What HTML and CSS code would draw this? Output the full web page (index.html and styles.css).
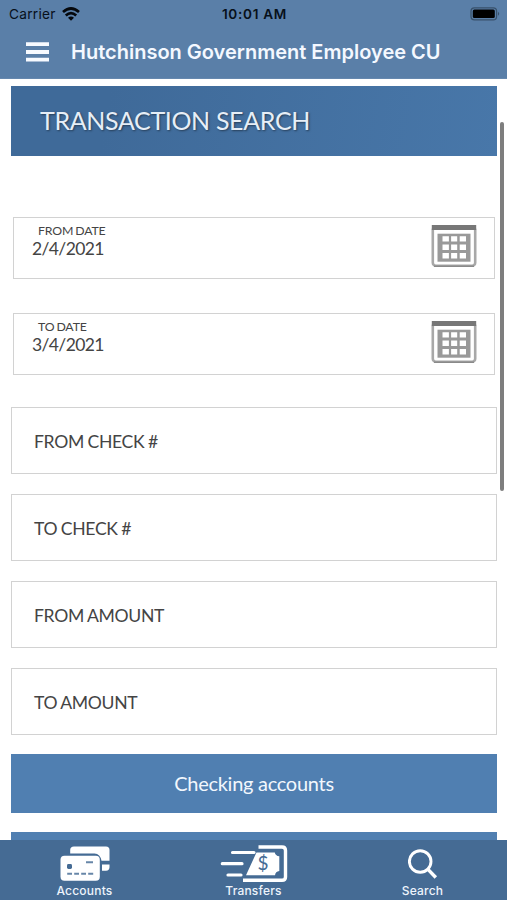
FILE: index.html
```html
<!DOCTYPE html>
<html lang="en">
<head>
<meta charset="utf-8">
<title>Transaction Search</title>
<link rel="stylesheet" href="styles.css">
</head>
<body>
<div class="app">
  <header class="header">
    <div class="status">
      <div class="carrier"><span>Carrier</span>
        <svg class="wifi" width="18" height="14" viewBox="0 0 18 14"><g fill="none" stroke="#05080c" stroke-width="2.7"><path d="M1 5Q9-2 17 5"/><path d="M3.8 8.4Q9 3.7 14.2 8.4"/></g><path d="M6 10.7Q9 8.2 12 10.7L9 13.7Z" fill="#05080c"/></svg>
      </div>
      <span class="clock">10:01 AM</span>
      <svg class="battery" width="31" height="14" viewBox="0 0 31 14"><rect x="1" y=".8" width="25.6" height="12" rx="3.4" fill="none" stroke="#38516b" stroke-width="1.2"/><rect x="2.8" y="2.5" width="22" height="8.6" rx="1.5" fill="#000"/><path d="M28 4.8Q30.4 6.8 28 8.8Z" fill="#38516b"/></svg>
    </div>
    <div class="titlebar">
      <svg class="burger" width="23" height="20" viewBox="0 0 23 20"><path d="M0 2.2H23M0 10H23M0 17.7H23" stroke="#f7faff" stroke-width="3.8"/></svg>
      <h1 class="title">Hutchinson Government Employee CU</h1>
    </div>
  </header>
  <main class="content">
    <h2 class="banner"><span>TRANSACTION SEARCH</span></h2>
    <div class="date-field">
      <div><label class="date-label">FROM DATE</label><div class="date-value">2/4/2021</div></div>
      <svg class="calendar" width="46" height="44" viewBox="0 0 46 44"><use href="#calendar"/></svg>
    </div>
    <div class="date-field">
      <div><label class="date-label">TO DATE</label><div class="date-value">3/4/2021</div></div>
      <svg class="calendar" width="46" height="44" viewBox="0 0 46 44"><use href="#calendar"/></svg>
    </div>
    <div class="fields">
      <div class="field">FROM CHECK #</div>
      <div class="field">TO CHECK #</div>
      <div class="field">FROM AMOUNT</div>
      <div class="field">TO AMOUNT</div>
    </div>
    <button class="button">Checking accounts</button>
    <button class="button"></button>
  </main>
  <div class="scrollbar"></div>
  <nav class="tabs">
    <a class="tab">
      <svg width="50" height="36" viewBox="0 0 50 36"><path d="M10.2 7.5V4Q10.2.5 14 .5H46Q49.5.5 49.5 4V14.7H41.5Q40.2 7.9 34.5 7.5Z" fill="#fff"/><path d="M42 18.4H49.5V21Q49.5 24.7 46 24.7H42Z" fill="#fff"/><rect x=".5" y="9.8" width="39.3" height="25" rx="4" fill="#fff"/><rect x="7" y="18" width="5" height="5" rx="1.4" fill="#456b94"/><path d="M26 16.2H33M7.2 27.7H12M14.2 27.7H19M21.2 27.7H26M28.2 27.7H33.2" stroke="#6786a8" stroke-width="1.9"/></svg>
      <span>Accounts</span>
    </a>
    <a class="tab">
      <svg width="68" height="38" viewBox="0 0 68 38"><path d="M12.5 7.5H34M2.3 18.7H22M8 30H21" stroke="#fff" stroke-width="3.2" stroke-linecap="round"/><path d="M38.5 2H62Q65.5 2 65.5 5.5V32Q65.5 35.3 62 35.3H23" fill="none" stroke="#fff" stroke-width="3.4"/><path d="M36.5 7.4H54.8Q55.3 10.7 59.3 11.2V26Q55.5 26.5 55 30.2H26Z" fill="#fff"/><text x="43.2" y="25.4" class="dollar">$</text></svg>
      <span>Transfers</span>
    </a>
    <a class="tab">
      <svg width="30" height="36" viewBox="0 0 30 36"><circle cx="12.2" cy="15.5" r="10.8" fill="none" stroke="#fff" stroke-width="2.9"/><path d="M20 23.3L27.8 31.5" stroke="#fff" stroke-width="3.4"/></svg>
      <span>Search</span>
    </a>
  </nav>
</div>
<svg class="defs" width="0" height="0"><defs><g id="calendar">
  <rect x="1.8" y="3" width="42.4" height="38.7" rx="3" fill="#fff" stroke="#a8a8a8" stroke-width="2.6"/>
  <path d="M3 42.2H43" stroke="#8a8a8a" stroke-width="1.6"/>
  <path d="M.8 1H45.2V6H.8Z" fill="#777"/>
  <rect x="6.5" y="9.7" width="33" height="28" fill="#999"/>
  <path transform="translate(0 1)" fill="#fff" d="M11.5 11.2H17.9V16.6H11.5ZM20.1 11.2H26.2V16.6H20.1ZM28.7 11.2H35V16.6H28.7ZM11.5 19.5H17.9V25H11.5ZM20.1 19.5H26.2V25H20.1ZM28.7 19.5H35V25H28.7ZM11.5 28H17.9V33.4H11.5ZM20.1 28H26.2V33.4H20.1ZM28.7 28H35V33.4H28.7Z"/>
</g></defs></svg>
</body>
</html>
```
FILE: styles.css
```css
* { box-sizing: border-box; }
body { margin: 0; background: #fff; font-family: Lato, sans-serif; }
.app { position: relative; width: 507px; height: 900px; overflow: hidden; display: flex; flex-direction: column; }
.header { flex: none; height: 79px; background: #5a7fa8; font-family: Inter, sans-serif; border-bottom: 1px solid #6688ae; }
.status { height: 28px; display: grid; grid-template-columns: 1fr auto 1fr; align-items: center; padding: 0 6px 0 9px; color: #07101a; }
.carrier { display: flex; align-items: center; gap: 6px; font-size: 13.7px; letter-spacing: .25px; }
.wifi { margin-top: -1px; }
.clock { font-size: 13.6px; font-weight: 600; letter-spacing: .7px; margin: -1px 1px 0 0; }
.battery { justify-self: end; margin-top: -1px; }
.titlebar { display: flex; align-items: center; height: 48px; padding-left: 26px; gap: 22px; }
.title { margin: 0; font-size: 20px; font-weight: 600; color: #f4f8ff; white-space: nowrap; }
.content { flex: 1; min-height: 0; overflow: hidden; padding: 7px 10px 0 11px; }
.banner { margin: 0 0 61px; height: 69.5px; padding: 0 0 1px 29px; display: flex; align-items: center; font-size: 25px; font-weight: 400; letter-spacing: -.35px; color: #e6eef7; background: linear-gradient(100deg, #3f6a99 20%, #4877a9); text-shadow: 1px 1px 2px #263e58; }
.date-field { height: 62px; margin: 0 2px 34.5px; padding: 6px 17px 0 18px; border: 1px solid #d2d2d2; display: flex; justify-content: space-between; color: #444; }
.date-label { display: block; margin-left: 6px; font-size: 12.3px; line-height: 13px; letter-spacing: -.15px; word-spacing: -1px; }
.date-value { font-size: 17.5px; line-height: 24px; letter-spacing: -.62px; }
.fields { display: flex; flex-direction: column; gap: 20px; margin-top: -3px; }
.field { height: 67px; border: 1px solid #d2d2d2; padding: 2px 0 0 22px; display: flex; align-items: center; font-size: 17.6px; letter-spacing: -.33px; word-spacing: -.6px; color: #444; }
.button { display: block; width: 100%; height: 58.5px; margin: 19.5px 0 0; padding: 0; border: 0; background: #507fb1; color: #f2f7fd; font: 20px Lato, sans-serif; letter-spacing: -.28px; }
.scrollbar { position: absolute; right: 3px; top: 122px; width: 4px; height: 369px; border-radius: 2px; background: #7e7e7e; }
.tabs { flex: none; height: 60px; background: #456b94; display: grid; grid-template-columns: repeat(3, 1fr); }
.tab { display: flex; flex-direction: column; align-items: center; padding-top: 5px; font: 500 12px/14px Inter, sans-serif; letter-spacing: .2px; color: #edf4fc; }
.tab svg { height: 38px; }
.tab span { margin-top: 1px; }
.dollar { font: 19px Lato, sans-serif; fill: #456b94; text-anchor: middle; }
.defs { position: absolute; }
```
